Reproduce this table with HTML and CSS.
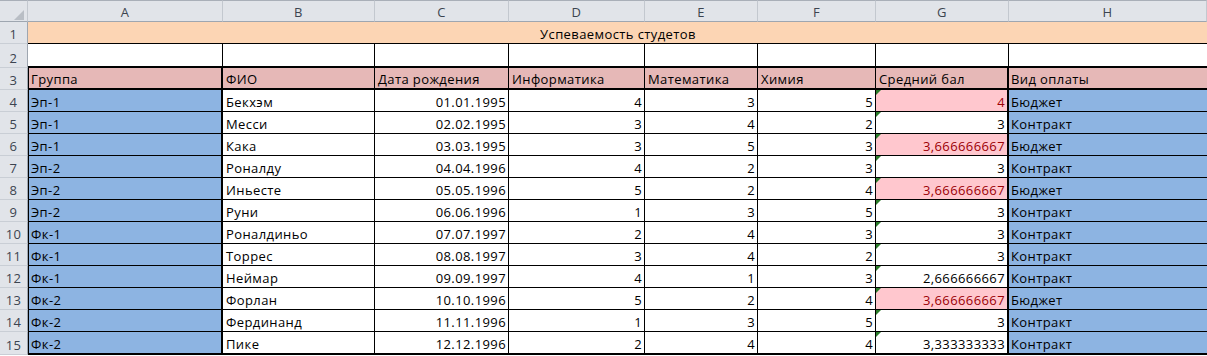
FILE: index.html
```html
<!DOCTYPE html>
<html lang="ru">
<head>
<meta charset="utf-8">
<title>Успеваемость студетов</title>
<link rel="stylesheet" href="styles.css">
</head>
<body>
<div class="sheet">
  <div class="hc corner"><svg width="10" height="10" viewBox="0 0 10 10"><polygon points="10,0 10,10 0,10" fill="#b9bec5"/></svg></div>
  <div class="hc">A</div><div class="hc">B</div><div class="hc">C</div><div class="hc">D</div><div class="hc">E</div><div class="hc">F</div><div class="hc">G</div><div class="hc">H</div>

  <div class="rh">1</div>
  <div class="c title">Успеваемость студетов</div>

  <div class="rh">2</div>
  <div class="c r2"></div><div class="c r2"></div><div class="c r2"></div><div class="c r2"></div><div class="c r2"></div><div class="c r2"></div><div class="c r2"></div><div class="c r2 ch"></div>

  <div class="rh">3</div>
  <div class="c r3 ca">Группа</div><div class="c r3">ФИО</div><div class="c r3">Дата рождения</div><div class="c r3">Информатика</div><div class="c r3">Математика</div><div class="c r3">Химия</div><div class="c r3 cg">Средний бал</div><div class="c r3 ch">Вид оплаты</div>

  <div class="rh">4</div>
  <div class="c ca">Эп-1</div><div class="c">Бекхэм</div><div class="c n">01.01.1995</div><div class="c n">4</div><div class="c n">3</div><div class="c n">5</div><div class="c n cg bad">4</div><div class="c ch">Бюджет</div>

  <div class="rh">5</div>
  <div class="c ca">Эп-1</div><div class="c">Месси</div><div class="c n">02.02.1995</div><div class="c n">3</div><div class="c n">4</div><div class="c n">2</div><div class="c n cg">3</div><div class="c ch">Контракт</div>

  <div class="rh">6</div>
  <div class="c ca">Эп-1</div><div class="c">Кака</div><div class="c n">03.03.1995</div><div class="c n">3</div><div class="c n">5</div><div class="c n">3</div><div class="c n cg bad">3,666666667</div><div class="c ch">Бюджет</div>

  <div class="rh">7</div>
  <div class="c ca">Эп-2</div><div class="c">Роналду</div><div class="c n">04.04.1996</div><div class="c n">4</div><div class="c n">2</div><div class="c n">3</div><div class="c n cg">3</div><div class="c ch">Контракт</div>

  <div class="rh">8</div>
  <div class="c ca">Эп-2</div><div class="c">Иньесте</div><div class="c n">05.05.1996</div><div class="c n">5</div><div class="c n">2</div><div class="c n">4</div><div class="c n cg bad">3,666666667</div><div class="c ch">Бюджет</div>

  <div class="rh">9</div>
  <div class="c ca">Эп-2</div><div class="c">Руни</div><div class="c n">06.06.1996</div><div class="c n">1</div><div class="c n">3</div><div class="c n">5</div><div class="c n cg">3</div><div class="c ch">Контракт</div>

  <div class="rh">10</div>
  <div class="c ca">Фк-1</div><div class="c">Роналдиньо</div><div class="c n">07.07.1997</div><div class="c n">2</div><div class="c n">4</div><div class="c n">3</div><div class="c n cg">3</div><div class="c ch">Контракт</div>

  <div class="rh">11</div>
  <div class="c ca">Фк-1</div><div class="c">Торрес</div><div class="c n">08.08.1997</div><div class="c n">3</div><div class="c n">4</div><div class="c n">2</div><div class="c n cg">3</div><div class="c ch">Контракт</div>

  <div class="rh">12</div>
  <div class="c ca">Фк-1</div><div class="c">Неймар</div><div class="c n">09.09.1997</div><div class="c n">4</div><div class="c n">1</div><div class="c n">3</div><div class="c n cg">2,666666667</div><div class="c ch">Контракт</div>

  <div class="rh">13</div>
  <div class="c ca">Фк-2</div><div class="c">Форлан</div><div class="c n">10.10.1996</div><div class="c n">5</div><div class="c n">2</div><div class="c n">4</div><div class="c n cg bad">3,666666667</div><div class="c ch">Бюджет</div>

  <div class="rh">14</div>
  <div class="c ca">Фк-2</div><div class="c">Фердинанд</div><div class="c n">11.11.1996</div><div class="c n">1</div><div class="c n">3</div><div class="c n">5</div><div class="c n cg">3</div><div class="c ch">Контракт</div>

  <div class="rh">15</div>
  <div class="c ca last">Фк-2</div><div class="c last">Пике</div><div class="c n last">12.12.1996</div><div class="c n last">2</div><div class="c n last">4</div><div class="c n last">4</div><div class="c n cg last">3,333333333</div><div class="c ch last">Контракт</div>
</div>
</body>
</html>
```
FILE: styles.css
```css
html, body {
  margin: 0;
  padding: 0;
  background: #ffffff;
}

.sheet {
  display: grid;
  grid-template-columns: 28px 195px 152px 134px 136px 113px 118px 133px 198px;
  grid-template-rows: 22px 22px 24px 22px repeat(11, 22px) 23px;
  font-family: "Open Sans", "Liberation Sans", sans-serif;
  font-size: 13px;
  letter-spacing: 0.4px;
  line-height: 16px;
  color: #000;
}

.sheet > div {
  box-sizing: border-box;
  display: flex;
  align-items: flex-end;
  white-space: nowrap;
  overflow: hidden;
  padding-bottom: 1px;
}

/* column header */
.hc {
  background: #e1e4e9;
  color: #3c4450;
  justify-content: center;
  border-top: 1px solid #a9afb8;
  border-right: 1px solid #c3c8cf;
  border-bottom: 1px solid #9ea6b0;
}

.corner {
  justify-content: flex-end;
  padding: 0 3px 3px 0;
}

.corner svg {
  display: block;
}

/* row header */
.rh {
  background: #e1e4e9;
  color: #3c4450;
  justify-content: center;
  border-right: 1px solid #9ea6b0;
  border-bottom: 1px solid #c9ced5;
}

/* data cells */
.c {
  position: relative;
  padding-left: 3px;
  padding-right: 2px;
  border-right: 1px solid #000;
  border-bottom: 1px solid #000;
}

.n {
  justify-content: flex-end;
}

.title {
  grid-column: span 8;
  justify-content: center;
  background: #fcd5b4;
  border-right: none;
}

.r2 {
  border-bottom-width: 2px;
}

.r3 {
  background: #e6b8b7;
  border-bottom-width: 2px;
}

.ca {
  border-right-width: 2px;
  border-left: 1px solid #000;
  padding-left: 2px;
}

.ca:not(.r3) {
  background: #8db4e2;
}

.cg {
  border-right-width: 2px;
}

.ch {
  border-right: none;
  padding-left: 2px;
}

.ch:not(.r3):not(.r2) {
  background: #8db4e2;
}

.n.cg::before {
  content: "";
  position: absolute;
  top: 0;
  left: 0;
  border-top: 5px solid #2a7d2a;
  border-right: 5px solid transparent;
}

.bad {
  background: #ffc7ce;
  color: #9c0006;
}

.last {
  border-bottom-width: 2px;
}
```
